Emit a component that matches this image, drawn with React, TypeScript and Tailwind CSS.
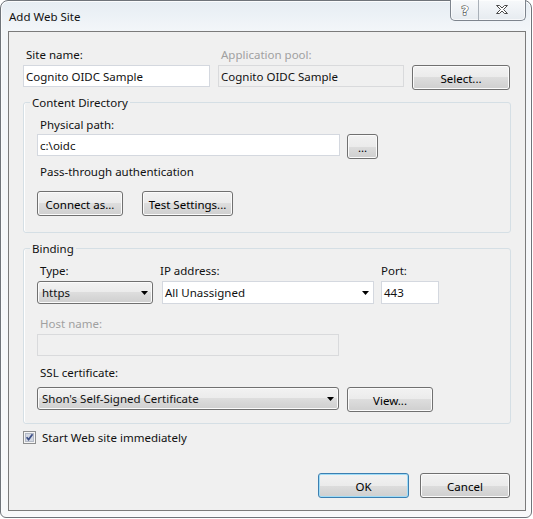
import type { ReactNode } from 'react';

const BUTTON_FACE =
  'bg-[linear-gradient(to_bottom,#f2f2f2_0%,#ebebeb_50%,#dddddd_50%,#cfcfcf_100%)]';

/**
 * Win7 push button
 */
function Button({
  children,
  className = '',
  isDefault = false,
}: {
  children: ReactNode;
  className?: string;
  isDefault?: boolean;
}) {
  return (
    <button
      type="button"
      className={`flex h-[25px] shrink-0 items-center justify-center rounded-[3px] border pt-[1px] text-black ${BUTTON_FACE} ${
        isDefault
          ? 'border-[#3c7fb1] shadow-[inset_0_0_0_1px_#9fdcf7]'
          : 'border-[#707070] shadow-[inset_0_0_0_1px_#fbfbfb]'
      } ${className}`}
    >
      {children}
    </button>
  );
}

function TextBox({
  children,
  className = '',
  readOnly = false,
}: {
  children?: ReactNode;
  className?: string;
  readOnly?: boolean;
}) {
  return (
    <div
      className={`flex h-[22px] shrink-0 items-center border pl-[2px] ${
        readOnly ? 'border-[#d9dadc] bg-[#f0f0f0]' : 'border-[#d4d8df] bg-white'
      } ${className}`}
    >
      {children}
    </div>
  );
}

function DropArrow() {
  return (
    <svg width="7" height="4" viewBox="0 0 7 4" className="shrink-0">
      <path d="M0 0h7L3.5 4z" fill="#000" />
    </svg>
  );
}

/**
 * Combo box: flat (editable look) or button style (dropdown list)
 */
function Select({
  children,
  className = '',
  flat = false,
}: {
  children: ReactNode;
  className?: string;
  flat?: boolean;
}) {
  return (
    <div
      className={`flex h-[23px] shrink-0 items-center justify-between border pr-[4px] ${
        flat
          ? 'border-[#d4d8df] bg-white pl-[2px]'
          : `rounded-[3px] border-[#707070] pl-[4px] ${BUTTON_FACE} shadow-[inset_0_0_0_1px_#fbfbfb]`
      } ${className}`}
    >
      <span>{children}</span>
      <DropArrow />
    </div>
  );
}

function GroupBox({
  title,
  className = '',
  children,
}: {
  title: string;
  className?: string;
  children: ReactNode;
}) {
  return (
    <fieldset
      className={`w-[488px] rounded-[3px] border border-[#d5dfe5] shadow-[inset_1px_0_0_#fff] ${className}`}
    >
      <legend className="ml-[6px] px-[2px]">{title}</legend>
      {children}
    </fieldset>
  );
}

function CaptionButtons() {
  return (
    <div className="absolute top-[-1px] right-[5px] flex h-[21px] w-[76px] rounded-b-[5px] border border-t-0 border-[#7d848d] bg-[linear-gradient(to_bottom,#f7f9fb,#e6ebf0)] shadow-[inset_0_0_0_1px_#ffffffaa]">
      <div className="flex w-[28px] items-center justify-center border-r border-[#a9b0b8] pb-[1px]">
        <svg width="12" height="15" viewBox="0 0 12 15">
          <text
            x="6"
            y="12.5"
            textAnchor="middle"
            fontFamily="DejaVu Sans, sans-serif"
            fontWeight="bold"
            fontSize="13"
            fill="#fff"
            stroke="#3f3f3f"
            strokeWidth="1.1"
            paintOrder="stroke"
          >
            ?
          </text>
        </svg>
      </div>
      <div className="flex flex-1 items-center justify-center pb-[2px]">
        <svg width="14" height="11" viewBox="0 0 14 11">
          <path
            d="M1.5 1.5h3l2.5 2.5 2.5-2.5h3l-4 4 4 4h-3l-2.5-2.5-2.5 2.5h-3l4-4z"
            fill="#fff"
            stroke="#4b4b4b"
            strokeLinejoin="round"
          />
        </svg>
      </div>
    </div>
  );
}

function CheckBox() {
  return (
    <svg width="13" height="13" viewBox="0 0 13 13" className="shrink-0">
      <rect x="0.5" y="0.5" width="12" height="12" fill="#f5f5f5" stroke="#8e8f8f" />
      <rect x="2.5" y="2.5" width="8" height="8" fill="#d3d8e2" stroke="#b4bac6" />
      <path d="M3.6 6.2l2 2.4 3.9-5.4" fill="none" stroke="#3d4f86" strokeWidth="1.7" />
    </svg>
  );
}

export default function App() {
  return (
    <div className="h-[519px] w-[533px] bg-white font-['Noto_Sans',sans-serif] text-[11.5px] leading-[15px] text-[#111]">
      <div className="relative flex h-[518px] w-[532px] flex-col rounded-t-[8px] rounded-b-[6px] border border-[#6f747a] bg-[linear-gradient(to_bottom,#e6edf3,#f3f6f9_30px,#f8f9fa)] pr-[5px] pb-[6px] pl-[7px] shadow-[inset_0_0_0_1px_#fbfcfd]">
        {/* Title bar */}
        <div className="flex h-[30px] items-center pl-[1px]">Add Web Site</div>
        <CaptionButtons />

        {/* Client area */}
        <div className="flex h-[480px] flex-col border border-[#7b7b7b] bg-[#f0f0f0] pt-[15px] pr-[15px] pb-[12px] pl-[14px]">
          <div className="flex">
            <div className="flex w-[187px] flex-col">
              <span className="pl-[3px]">Site name:</span>
              <TextBox className="mt-[3px]">Cognito OIDC Sample</TextBox>
            </div>
            <div className="ml-[8px] flex w-[186px] flex-col">
              <span className="pl-[3px] text-[#a0a0a0]">Application pool:</span>
              <TextBox readOnly className="mt-[3px]">
                Cognito OIDC Sample
              </TextBox>
            </div>
            <Button className="mt-[18px] ml-[8px] w-[98px]">Select...</Button>
          </div>

          <GroupBox title="Content Directory" className="mt-[5px]">
            <div className="flex flex-col pt-[7px] pb-[16px] pl-[13px]">
              <span className="pl-[3px]">Physical path:</span>
              <div className="mt-[2px] flex items-start">
                <TextBox className="w-[303px]">{'c:\\oidc'}</TextBox>
                <Button className="ml-[7px] w-[31px]">...</Button>
              </div>
              <span className="mt-[5px] pl-[3px]">Pass-through authentication</span>
              <div className="mt-[12px] flex">
                <Button className="w-[86px]">Connect as...</Button>
                <Button className="ml-[19px] w-[91px]">Test Settings...</Button>
              </div>
            </div>
          </GroupBox>

          <GroupBox title="Binding" className="mt-[8px]">
            <div className="flex flex-col pt-[7px] pb-[11px] pl-[13px]">
              <div className="flex items-start">
                <div className="flex w-[116px] flex-col">
                  <span className="pl-[3px]">Type:</span>
                  <Select className="mt-[3px]">https</Select>
                </div>
                <div className="ml-[7px] flex flex-col">
                  <span>IP address:</span>
                  <Select flat className="mt-[3px] ml-[2px] w-[212px]">
                    All Unassigned
                  </Select>
                </div>
                <div className="ml-[7px] flex flex-col">
                  <span>Port:</span>
                  <TextBox className="mt-[3px] h-[23px] w-[58px]">443</TextBox>
                </div>
              </div>

              <span className="mt-[12px] pl-[3px] text-[#a0a0a0]">Host name:</span>
              <TextBox readOnly className="mt-[3px] w-[302px]" />

              <span className="mt-[9px] pl-[3px]">SSL certificate:</span>
              <div className="mt-[7px] flex items-start">
                <Select className="w-[302px]">Shon's Self-Signed Certificate</Select>
                <Button className="ml-[8px] w-[86px]">View...</Button>
              </div>
            </div>
          </GroupBox>

          <label className="mt-[6px] flex items-center">
            <CheckBox />
            <span className="ml-[6px]">Start Web site immediately</span>
          </label>

          <div className="mt-auto flex justify-end">
            <Button isDefault className="w-[91px]">
              OK
            </Button>
            <Button className="ml-[11px] w-[90px]">Cancel</Button>
          </div>
        </div>
      </div>
    </div>
  );
}
